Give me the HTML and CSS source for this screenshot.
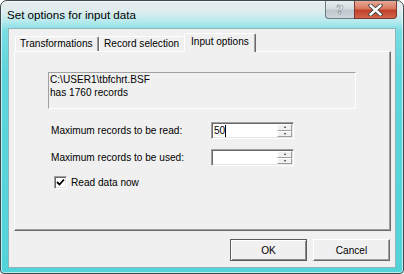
FILE: index.html
```html
<!DOCTYPE html>
<html>
<head>
<meta charset="utf-8">
<link rel="stylesheet" href="styles.css">
</head>
<body>
<div class="window">
  <div class="titlebar">
    <div class="title">Set options for input data</div>
    <div class="caption">
      <div class="cbtn help"><span>?</span></div>
      <div class="cbtn close">
        <svg width="15" height="12" viewBox="0 0 15 12"><path d="M2.5 1.5 L12.5 10.5 M12.5 1.5 L2.5 10.5" stroke="#3a3a3a" stroke-width="4.2" stroke-linecap="round"/><path d="M2.5 1.5 L12.5 10.5 M12.5 1.5 L2.5 10.5" stroke="#ffffff" stroke-width="2.4" stroke-linecap="round"/></svg>
      </div>
    </div>
  </div>
  <div class="client">
    <div class="tabs">
      <div class="tab t1">Transformations</div>
      <div class="tab t2">Record selection</div>
      <div class="tab sel t3">Input options</div>
    </div>
    <div class="panel">
      <div class="info">
        <div>C:\USER1\tbfchrt.BSF</div>
        <div>has 1760 records</div>
      </div>
      <div class="row r1">
        <div class="label">Maximum records to be read:</div>
        <div class="spin">
          <div class="field">50<span class="caret"></span></div>
          <div class="arrows">
            <div class="arr up"><i></i></div>
            <div class="arr down"><i></i></div>
          </div>
        </div>
      </div>
      <div class="row r2">
        <div class="label">Maximum records to be used:</div>
        <div class="spin">
          <div class="field"></div>
          <div class="arrows">
            <div class="arr up"><i></i></div>
            <div class="arr down"><i></i></div>
          </div>
        </div>
      </div>
      <div class="check">
        <div class="box">
          <svg width="9" height="9" viewBox="0 0 9 9"><path d="M1 4 L3.5 6.5 L8 1.5" fill="none" stroke="#000" stroke-width="1.8"/></svg>
        </div>
        <span>Read data now</span>
      </div>
    </div>
    <div class="buttons">
      <div class="btn ok">OK</div>
      <div class="btn">Cancel</div>
    </div>
  </div>
</div>
</body>
</html>
```
FILE: styles.css
```css
html, body { margin: 0; padding: 0; }
body { width: 404px; height: 274px; overflow: hidden; background: #ffffff; font-family: "Liberation Sans", Arial, sans-serif; font-size: 10.1px; color: #000; }

.window {
  width: 404px; height: 274px; box-sizing: border-box;
  border: 1px solid #3b4a4c; border-radius: 7px 7px 4px 4px;
  display: flex; flex-direction: column;
  background: linear-gradient(to bottom, #e7eced 0px, #dfecee 10px, #b8eaee 20px, #7adde3 30px, #5fd6dd 70px, #52d3da 100%);
  box-shadow: inset 0 0 0 1px rgba(255,255,255,0.6);
}

.titlebar { height: 27px; display: flex; align-items: flex-start; flex: none; }
.title { padding: 7px 0 0 6px; font-size: 11.6px; line-height: 14px; color: #000; }
.caption { margin-left: auto; margin-right: 6px; display: flex; }
.cbtn { height: 18px; box-sizing: border-box; display: flex; align-items: center; justify-content: center; border: 1px solid #6b7a80; border-top: none; }
.help { width: 29px; border-radius: 0 0 0 4px; background: linear-gradient(to bottom, #e8ecef 0%, #d6dde2 45%, #bfc8ce 55%, #cdd5da 100%); border-right: none; }
.help span { font-family: "DejaVu Sans", sans-serif; font-size: 13px; font-weight: bold; color: #f4f6f7; -webkit-text-stroke: 0.6px #7d8a90; line-height: 14px; }
.close { width: 43px; border-radius: 0 0 4px 0; background: linear-gradient(to bottom, #e8a897 0%, #d9785f 45%, #c3402a 55%, #d0644a 100%); border-color: #7a3a30; }

.client {
  flex: 1; margin: 0 7px 5px 7px;
  border: 1px solid #8fb4b8; background: #f0f0f0;
  display: flex; flex-direction: column;
  padding: 4px 4px 0 5px;
}

.tabs { display: flex; align-items: flex-end; height: 18px; padding-left: 1px; position: relative; z-index: 1; }
.tab {
  box-sizing: border-box; height: 15px; line-height: 13px;
  border-top: 1px solid #ffffff; border-left: 1px solid #ffffff; border-right: 1px solid #696969;
  box-shadow: inset -1px 0 0 #a0a0a0;
  border-radius: 2px 2px 0 0;
  padding-left: 4px; white-space: nowrap;
}
.t1 { width: 84px; }
.t2 { width: 87px; }
.t3 { width: 72px; }
.tab.sel { height: 19px; margin-left: -2px; margin-bottom: -1px; background: #f0f0f0; line-height: 15px; padding-left: 6px; }

.panel {
  height: 180px; box-sizing: border-box;
  border-top: 1px solid #ffffff; border-left: 1px solid #ffffff;
  border-right: 1px solid #696969; border-bottom: 1px solid #696969;
  box-shadow: inset -1px -1px 0 #a0a0a0;
  display: flex; flex-direction: column;
}

.info {
  margin: 20px 34px 0 33px; height: 37px; box-sizing: border-box;
  border-top: 1px solid #a0a0a0; border-left: 1px solid #a0a0a0;
  border-right: 1px solid #ffffff; border-bottom: 1px solid #ffffff;
  padding: 0 0 0 1px; line-height: 13px;
}

.row { display: flex; align-items: center; margin-left: 36px; }
.r1 { margin-top: 13px; }
.r2 { margin-top: 10px; }
.label { width: 160px; }

.spin { display: flex; width: 83px; height: 17px; box-sizing: border-box;
  border-top: 1px solid #a0a0a0; border-left: 1px solid #a0a0a0;
  border-right: 1px solid #ffffff; border-bottom: 1px solid #ffffff;
  box-shadow: inset 1px 1px 0 #696969, inset -1px -1px 0 #e3e3e3;
  background: #ffffff;
}
.field { flex: 1; padding-left: 2px; line-height: 15px; display: flex; align-items: center; }
.caret { display: inline-block; width: 1px; height: 12px; background: #000; }
.arrows { width: 16px; display: flex; flex-direction: column; padding: 1px 1px 1px 0; box-sizing: border-box; }
.arr { flex: 1; background: #f0f0f0; box-sizing: border-box;
  border-top: 1px solid #ffffff; border-left: 1px solid #ffffff;
  border-right: 1px solid #a0a0a0; border-bottom: 1px solid #a0a0a0;
  display: flex; align-items: center; justify-content: center; }
.arr i { display: block; width: 0; height: 0; border-left: 1.5px solid transparent; border-right: 1.5px solid transparent; }
.up i { border-bottom: 2px solid #333; }
.down i { border-top: 2px solid #333; }

.check { display: flex; align-items: center; margin: 10px 0 0 39px; }
.box { width: 13px; height: 13px; box-sizing: border-box; background: #fff;
  border-top: 1px solid #a0a0a0; border-left: 1px solid #a0a0a0;
  border-right: 1px solid #ffffff; border-bottom: 1px solid #ffffff;
  box-shadow: inset 1px 1px 0 #696969, inset -1px -1px 0 #e3e3e3;
  display: flex; align-items: center; justify-content: center; }
.check span { margin-left: 4px; }

.buttons { display: flex; justify-content: flex-end; gap: 6px; margin-top: 8px; margin-right: 1px; }
.btn { width: 77px; height: 22px; box-sizing: border-box; display: flex; align-items: center; justify-content: center;
  border-top: 1px solid #ffffff; border-left: 1px solid #ffffff;
  border-right: 1px solid #696969; border-bottom: 1px solid #696969;
  box-shadow: inset -1px -1px 0 #a0a0a0; background: #f0f0f0; }
.btn.ok { border: 1px solid #5a5a5a; box-shadow: inset 1px 1px 0 #ffffff, inset -1px -1px 0 #8a8a8a; }
```
